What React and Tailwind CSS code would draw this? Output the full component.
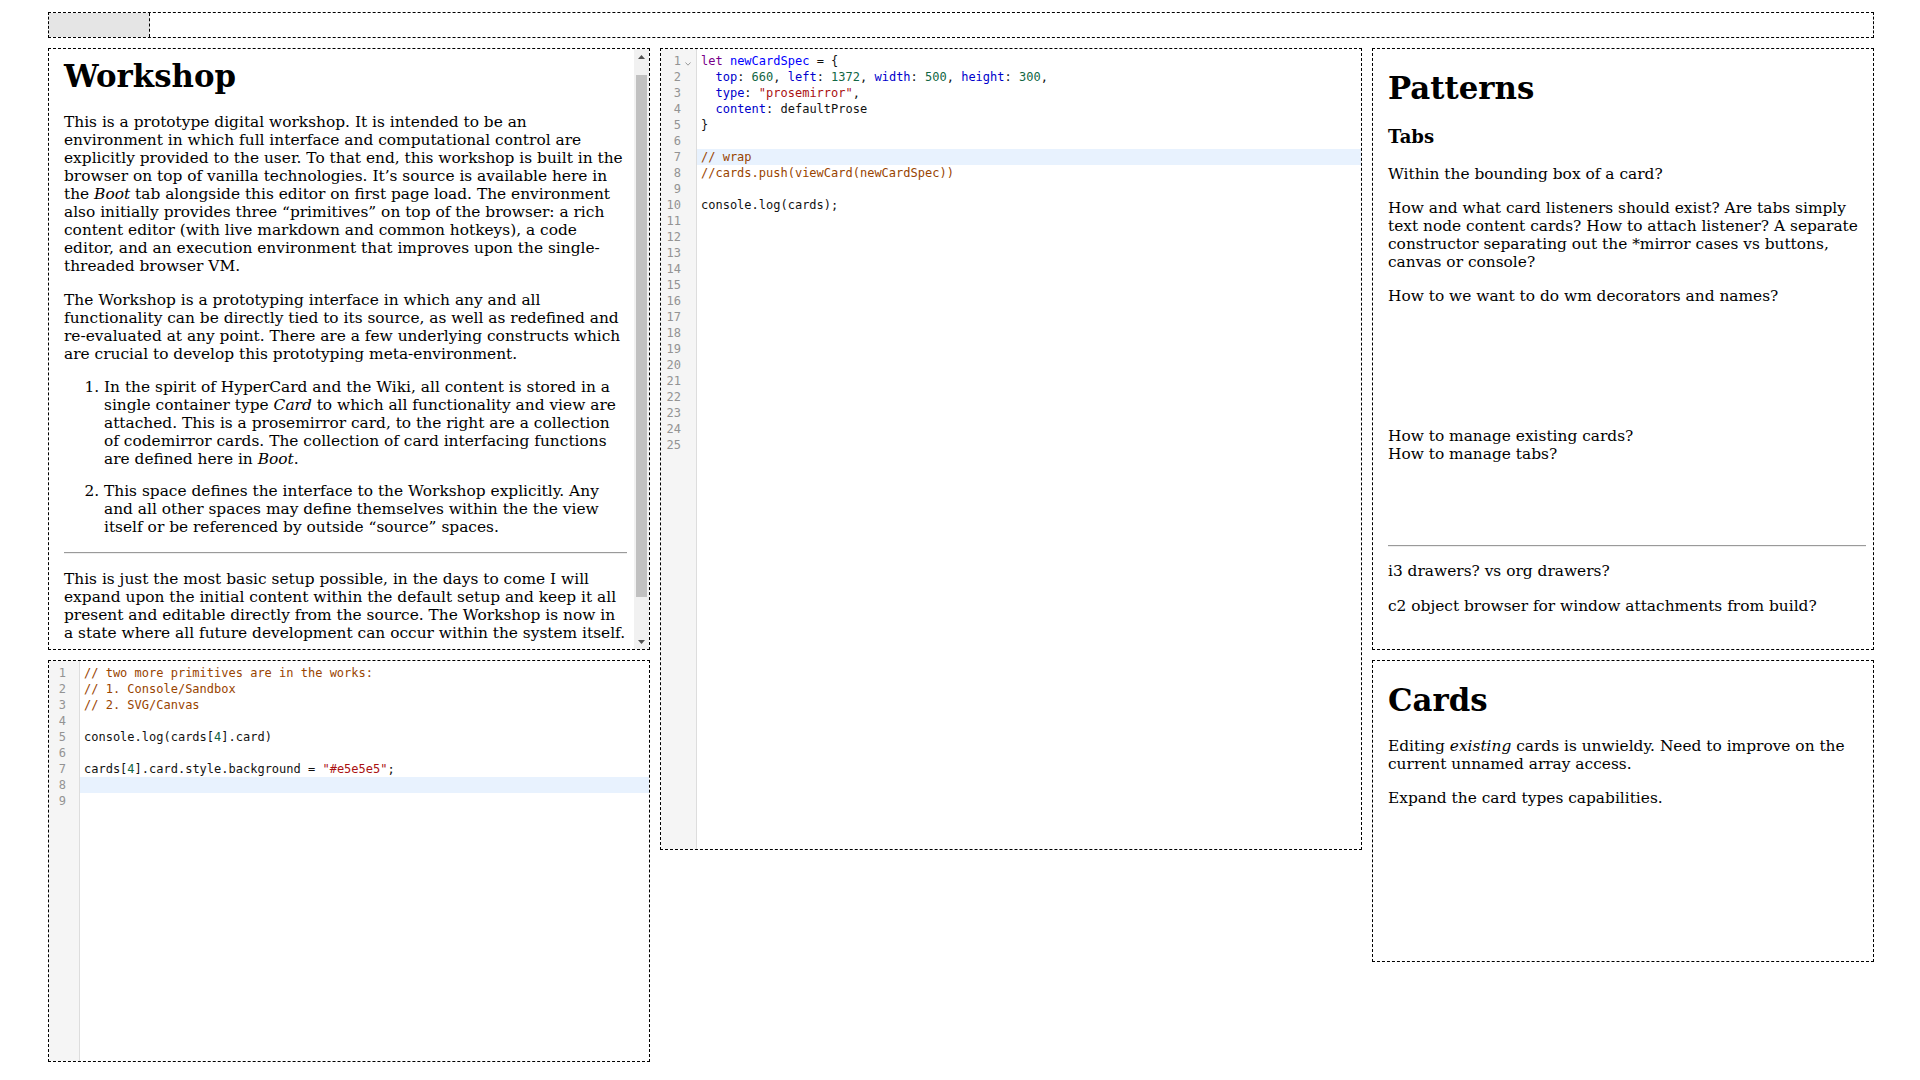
import React from "react";

const K = ({ children }) => <span className="text-[#770088]">{children}</span>;
const D = ({ children }) => <span className="text-[#0000ff]">{children}</span>;
const P = ({ children }) => <span className="text-[#0000cc]">{children}</span>;
const N = ({ children }) => <span className="text-[#116644]">{children}</span>;
const S = ({ children }) => <span className="text-[#aa1111]">{children}</span>;
const C = ({ children }) => <span className="text-[#994400]">{children}</span>;

function FoldMark() {
  return (
    <svg width="6" height="4" viewBox="0 0 6 4" className="mt-[9px]">
      <polyline points="0.5,0.5 3,3.2 5.5,0.5" fill="none" stroke="#9a9a9a" strokeWidth="1" />
    </svg>
  );
}

function CodeEditor({ lines, active, numW, foldW, foldLine }) {
  return (
    <div className="flex h-full font-['DejaVu_Sans_Mono',monospace] text-[12px] leading-[16px]">
      <div className="flex h-full bg-[#f5f5f5] border-r border-[#dddddd] text-[#939393]">
        <div className="flex flex-col py-[4px]" style={{ width: numW }}>
          {lines.map((_, i) => (
            <div key={i} className="h-[16px] pl-[5px] pr-[3px] text-right">
              {i + 1}
            </div>
          ))}
        </div>
        <div className="flex flex-col py-[4px]" style={{ width: foldW }}>
          {lines.map((_, i) => (
            <div key={i} className="h-[16px] flex justify-start pl-[1px]">
              {foldLine === i ? <FoldMark /> : null}
            </div>
          ))}
        </div>
      </div>
      <div className="flex-1 flex flex-col py-[4px] text-[#111111]">
        {lines.map((l, i) => (
          <div
            key={i}
            className={
              "h-[16px] pl-[4px] whitespace-pre " + (active === i ? "bg-[#e8f2fe]" : "")
            }
          >
            {l}
          </div>
        ))}
      </div>
    </div>
  );
}

const middleLines = [
  <>
    <K>let</K> <D>newCardSpec</D> = {"{"}
  </>,
  <>
    {"  "}
    <P>top</P>: <N>660</N>, <P>left</P>: <N>1372</N>, <P>width</P>: <N>500</N>, <P>height</P>: <N>300</N>,
  </>,
  <>
    {"  "}
    <P>type</P>: <S>"prosemirror"</S>,
  </>,
  <>
    {"  "}
    <P>content</P>: defaultProse
  </>,
  <>{"}"}</>,
  <></>,
  <>
    <C>// wrap</C>
  </>,
  <>
    <C>//cards.push(viewCard(newCardSpec))</C>
  </>,
  <></>,
  <>console.log(cards);</>,
  ...Array.from({ length: 15 }, () => <></>),
];

const bottomLines = [
  <>
    <C>// two more primitives are in the works:</C>
  </>,
  <>
    <C>// 1. Console/Sandbox</C>
  </>,
  <>
    <C>// 2. SVG/Canvas</C>
  </>,
  <></>,
  <>
    console.log(cards[<N>4</N>].card)
  </>,
  <></>,
  <>
    cards[<N>4</N>].card.style.background = <S>"#e5e5e5"</S>;
  </>,
  <></>,
  <></>,
];

function ScrollBar() {
  return (
    <div className="w-[15px] h-full flex flex-col bg-[#f1f1f1]">
      <div className="h-[15px] flex items-center justify-center">
        <svg width="7" height="4" viewBox="0 0 7 4">
          <polygon points="0,4 3.5,0 7,4" fill="#505050" />
        </svg>
      </div>
      <div className="flex-1 flex flex-col">
        <div className="mt-[11px] h-[522px] mx-[2px] bg-[#c1c1c1]" />
      </div>
      <div className="h-[15px] flex items-center justify-center">
        <svg width="7" height="4" viewBox="0 0 7 4">
          <polygon points="0,0 3.5,4 7,0" fill="#505050" />
        </svg>
      </div>
    </div>
  );
}

const prose = "font-['DejaVu_Serif',serif] text-black text-[15.4px] leading-[18px]";
const h1 = "text-[30.8px] leading-[36px] font-bold";

export default function App() {
  return (
    <div className="relative w-[1920px] h-[1080px] bg-white overflow-hidden">
      {/* top bar */}
      <div className="ml-[48px] mt-[12px] w-[1826px] h-[26px] border border-dashed border-black flex">
        <div className="w-[101px] h-full bg-[#e5e5e5] border-r border-dashed border-black" />
      </div>

      {/* Workshop prose card */}
      <div className="absolute left-[48px] top-[48px] w-[602px] h-[602px] border border-dashed border-black flex">
        <div className={"flex-1 overflow-hidden pl-[15px] pr-[7px] " + prose}>
          <div className="flex flex-col">
            <h1 className={"mt-[9px] " + h1}>Workshop</h1>
            <p className="mt-[19px]">
              This is a prototype digital workshop. It is intended to be an environment in which full
              interface and computational control are explicitly provided to the user. To that end, this
              workshop is built in the browser on top of vanilla technologies. It’s source is available
              here in the <em>Boot</em> tab alongside this editor on first page load. The environment also
              initially provides three “primitives” on top of the browser: a rich content editor (with live
              markdown and common hotkeys), a code editor, and an execution environment that improves upon
              the single-threaded browser VM.
            </p>
            <p className="mt-[16px]">
              The Workshop is a prototyping interface in which any and all functionality can be directly
              tied to its source, as well as redefined and re-evaluated at any point. There are a few
              underlying constructs which are crucial to develop this prototyping meta-environment.
            </p>
            <ol className="mt-[15px] list-decimal pl-[40px]">
              <li>
                In the spirit of HyperCard and the Wiki, all content is stored in a single container type{" "}
                <em>Card</em> to which all functionality and view are attached. This is a prosemirror card,
                to the right are a collection of codemirror cards. The collection of card interfacing
                functions are defined here in <em>Boot</em>.
              </li>
              <li className="mt-[14px]">
                This space defines the interface to the Workshop explicitly. Any and all other spaces may
                define themselves within the the view itself or be referenced by outside “source” spaces.
              </li>
            </ol>
            <hr className="mt-[16px] h-[2px] border-t border-b border-t-[#9a9a9a] border-b-[#eeeeee]" />
            <p className="mt-[16px] pb-[30px]">
              This is just the most basic setup possible, in the days to come I will expand upon the initial
              content within the default setup and keep it all present and editable directly from the
              source. The Workshop is now in a state where all future development can occur within the
              system itself.
            </p>
          </div>
        </div>
        <ScrollBar />
      </div>

      {/* bottom-left code card */}
      <div className="absolute left-[48px] top-[660px] w-[602px] h-[402px] border border-dashed border-black overflow-hidden">
        <CodeEditor lines={bottomLines} active={7} numW={20} foldW={10} foldLine={-1} />
      </div>

      {/* middle code card */}
      <div className="absolute left-[660px] top-[48px] w-[702px] h-[802px] border border-dashed border-black overflow-hidden">
        <CodeEditor lines={middleLines} active={6} numW={23} foldW={12} foldLine={0} />
      </div>

      {/* Patterns card */}
      <div className="absolute left-[1372px] top-[48px] w-[502px] h-[602px] border border-dashed border-black overflow-hidden">
        <div className={"flex flex-col pl-[15px] pr-[7px] " + prose}>
          <h1 className={"mt-[21px] " + h1}>Patterns</h1>
          <h3 className="mt-[20px] text-[18px] leading-[21px] font-bold">Tabs</h3>
          <p className="mt-[18px]">Within the bounding box of a card?</p>
          <p className="mt-[16px]">
            How and what card listeners should exist? Are tabs simply text node content cards? How to attach
            listener? A separate constructor separating out the *mirror cases vs buttons, canvas or console?
          </p>
          <p className="mt-[16px]">How to we want to do wm decorators and names?</p>
          <p className="mt-[122px]">
            How to manage existing cards?
            <br />
            How to manage tabs?
          </p>
          <hr className="mt-[82px] h-[2px] border-t border-b border-t-[#9a9a9a] border-b-[#eeeeee]" />
          <p className="mt-[15px]">i3 drawers? vs org drawers?</p>
          <p className="mt-[17px]">c2 object browser for window attachments from build?</p>
        </div>
      </div>

      {/* Cards card */}
      <div className="absolute left-[1372px] top-[660px] w-[502px] h-[302px] border border-dashed border-black overflow-hidden">
        <div className={"flex flex-col pl-[15px] pr-[7px] " + prose}>
          <h1 className={"mt-[21px] " + h1}>Cards</h1>
          <p className="mt-[19px]">
            Editing <em>existing</em> cards is unwieldy. Need to improve on the current unnamed array access.
          </p>
          <p className="mt-[16px]">Expand the card types capabilities.</p>
        </div>
      </div>
    </div>
  );
}
